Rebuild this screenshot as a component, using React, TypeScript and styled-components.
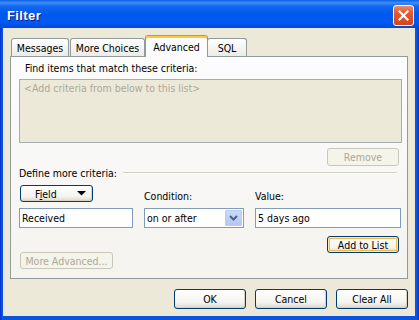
import React from "react";
import styled, { createGlobalStyle, css } from "styled-components";

const GlobalStyle = createGlobalStyle`
  html, body {
    margin: 0;
    padding: 0;
    background: #ffffff;
  }
  body {
    font-family: "DejaVu Sans Condensed", "Liberation Sans", Arial, sans-serif;
    font-size: 10.5px;
    color: #000000;
  }
  * {
    box-sizing: border-box;
  }
`;

const Window = styled.div`
  width: 419px;
  height: 320px;
  display: flex;
  flex-direction: column;
  overflow: hidden;
  background: linear-gradient(to right, #0831c7 0px, #0a53e0 2px, #0a53e0 calc(100% - 2px), #0831c7 100%);
`;

const TitleBar = styled.div`
  height: 28px;
  flex: none;
  display: flex;
  align-items: center;
  justify-content: space-between;
  padding: 2px 5px 0 7px;
  background: linear-gradient(
    to bottom,
    #0a5fe6 0%,
    #3d8ef8 10%,
    #1468ee 22%,
    #0058ee 50%,
    #005aef 80%,
    #0049d8 100%
  );
`;

const Title = styled.span`
  font-family: "Liberation Sans", Arial, sans-serif;
  font-weight: bold;
  font-size: 13px;
  letter-spacing: 0.4px;
  color: #ffffff;
  text-shadow: 1px 1px 0 #0a1e8a;
`;

const CloseButton = styled.div`
  width: 21px;
  height: 21px;
  border: 1px solid #ffffff;
  border-radius: 3px;
  background: linear-gradient(to bottom, #e98c6c 0%, #e05a33 35%, #cf461f 100%);
  display: flex;
  align-items: center;
  justify-content: center;
`;

const Frame = styled.div`
  flex: 1;
  display: flex;
  flex-direction: column;
  margin: 0 4px 4px 3px;
  padding: 7px 7px 0 7px;
  background: #ece9d8;
`;

const TabRow = styled.div`
  display: flex;
  align-items: flex-end;
  height: 21px;
`;

const Tab = styled.div<{ $w: number; $ml: number; $active?: boolean }>`
  width: ${(p) => p.$w}px;
  margin-left: ${(p) => p.$ml}px;
  height: 18px;
  padding-top: 1px;
  display: flex;
  align-items: center;
  justify-content: center;
  border: 1px solid #919b9c;
  border-bottom: none;
  border-radius: 3px 3px 0 0;
  background: linear-gradient(to bottom, #ffffff, #ecebe6);
  white-space: nowrap;
  ${(p) =>
    p.$active &&
    css`
      position: relative;
      z-index: 1;
      height: 22px;
      margin-bottom: -1px;
      padding-top: 0;
      border-top: 1px solid #e68b2c;
      box-shadow: inset 0 2px 0 #ffc73c;
      background: #fcfcfe;
    `}
`;

const Panel = styled.div`
  display: flex;
  flex-direction: column;
  border: 1px solid #919b9c;
  background: linear-gradient(to bottom, #fcfcfe, #f4f3ee);
  padding: 4px 5px 9px 8px;
`;

const Label = styled.div<{ $indent?: number }>`
  line-height: 14px;
  padding-left: ${(p) => p.$indent ?? 0}px;
  white-space: nowrap;
`;

const ListBox = styled.div`
  height: 64px;
  margin-top: 4px;
  border: 1px solid #a5acb2;
  background: #ece9d8;
  color: #aca899;
  padding: 1px 4px;
  line-height: 14px;
`;

const ButtonRow = styled.div<{ $mt: number }>`
  display: flex;
  justify-content: flex-end;
  margin-top: ${(p) => p.$mt}px;
  padding-right: 3px;
`;

const Button = styled.button<{ $w: number; $h: number; $default?: boolean }>`
  width: ${(p) => p.$w}px;
  height: ${(p) => p.$h}px;
  padding: 0;
  font-family: inherit;
  font-size: 10.5px;
  color: #000000;
  border: 1px solid #003c74;
  border-radius: 3px;
  background: linear-gradient(to bottom, #ffffff 0%, #f4f3ee 70%, #dcd8cc 100%);
  box-shadow: inset -1px -1px 0 #d6d0c5;
  cursor: default;
  ${(p) =>
    p.$default &&
    css`
      box-shadow: inset 0 0 0 1px #ffe9a9, inset 0 0 0 2px #f5b94a;
    `}
  &:disabled {
    color: #aca899;
    border-color: #c9c7ba;
    background: #f5f4ea;
    box-shadow: none;
  }
`;

const GroupHeader = styled.div`
  display: flex;
  align-items: center;
  height: 13px;
`;

const GroupLine = styled.div`
  flex: 1;
  margin: 1px 5px 0 6px;
  border-top: 1px solid #d0d0bf;
  border-bottom: 1px solid #ffffff;
`;

const CriteriaGrid = styled.div`
  display: grid;
  grid-template-columns: 114px 100px 146px;
  grid-template-rows: 24px 20px;
  column-gap: 11px;
  row-gap: 5px;
`;

const FieldButton = styled(Button)`
  align-self: start;
  margin-top: 6px;
  margin-left: 1px;
  display: flex;
  align-items: center;
  justify-content: space-between;
  padding: 0 6px 0 14px;
`;

const GridLabel = styled.div`
  align-self: end;
  line-height: 13px;
`;

const TextBox = styled.div`
  height: 20px;
  display: flex;
  align-items: center;
  justify-content: space-between;
  border: 1px solid #7f9db9;
  background: #ffffff;
  padding: 1px 1px 1px 2px;
  white-space: nowrap;
`;

const ComboButton = styled.div`
  width: 17px;
  height: 16px;
  border: 1px solid #bacbf4;
  border-radius: 1px;
  background: linear-gradient(to bottom, #cbd8fa, #b3c7f3);
  display: flex;
  align-items: center;
  justify-content: center;
`;

const MoreButton = styled(Button)`
  align-self: flex-start;
  margin-top: -1px;
  margin-left: 1px;
`;

const Footer = styled.div`
  display: flex;
  justify-content: flex-end;
  gap: 9px;
  margin-top: 10px;
`;

const tabs = [
  { label: "Messages", w: 58, ml: 1 },
  { label: "More Choices", w: 75, ml: 1 },
  { label: "Advanced", w: 63, ml: 0, active: true },
  { label: "SQL", w: 40, ml: -1 },
];

const App = () => {
  return (
    <>
      <GlobalStyle />
      <Window>
        <TitleBar>
          <Title>Filter</Title>
          <CloseButton>
            <svg width="13" height="13" viewBox="0 0 13 13">
              <path d="M2.5 2.5 L10.5 10.5 M10.5 2.5 L2.5 10.5" stroke="#ffffff" strokeWidth="2.2" strokeLinecap="square" />
            </svg>
          </CloseButton>
        </TitleBar>
        <Frame>
          <TabRow>
            {tabs.map((t) => (
              <Tab key={t.label} $w={t.w} $ml={t.ml} $active={t.active}>
                {t.label}
              </Tab>
            ))}
          </TabRow>
          <Panel>
            <Label $indent={6}>Find items that match these criteria:</Label>
            <ListBox>&lt;Add criteria from below to this list&gt;</ListBox>
            <ButtonRow $mt={5}>
              <Button $w={72} $h={18} disabled>
                Remove
              </Button>
            </ButtonRow>
            <GroupHeader>
              <Label>Define more criteria:</Label>
              <GroupLine />
            </GroupHeader>
            <CriteriaGrid>
              <FieldButton $w={73} $h={17}>
                <span>
                  F<u>i</u>eld
                </span>
                <svg width="9" height="5" viewBox="0 0 9 5">
                  <polygon points="0,0 9,0 4.5,4.5" fill="#000000" />
                </svg>
              </FieldButton>
              <GridLabel>Condition:</GridLabel>
              <GridLabel>Value:</GridLabel>
              <TextBox>Received</TextBox>
              <TextBox>
                <span>on or after</span>
                <ComboButton>
                  <svg width="9" height="6" viewBox="0 0 9 6">
                    <path d="M1 1 L4.5 4.5 L8 1" stroke="#4d6185" strokeWidth="2" fill="none" />
                  </svg>
                </ComboButton>
              </TextBox>
              <TextBox>5 days ago</TextBox>
            </CriteriaGrid>
            <ButtonRow $mt={8}>
              <Button $w={72} $h={17} $default>
                Add to List
              </Button>
            </ButtonRow>
            <MoreButton $w={93} $h={17} disabled>
              More Advanced...
            </MoreButton>
          </Panel>
          <Footer>
            <Button $w={72} $h={20}>OK</Button>
            <Button $w={72} $h={20}>Cancel</Button>
            <Button $w={72} $h={20}>Clear All</Button>
          </Footer>
        </Frame>
      </Window>
    </>
  );
};

export default App;
